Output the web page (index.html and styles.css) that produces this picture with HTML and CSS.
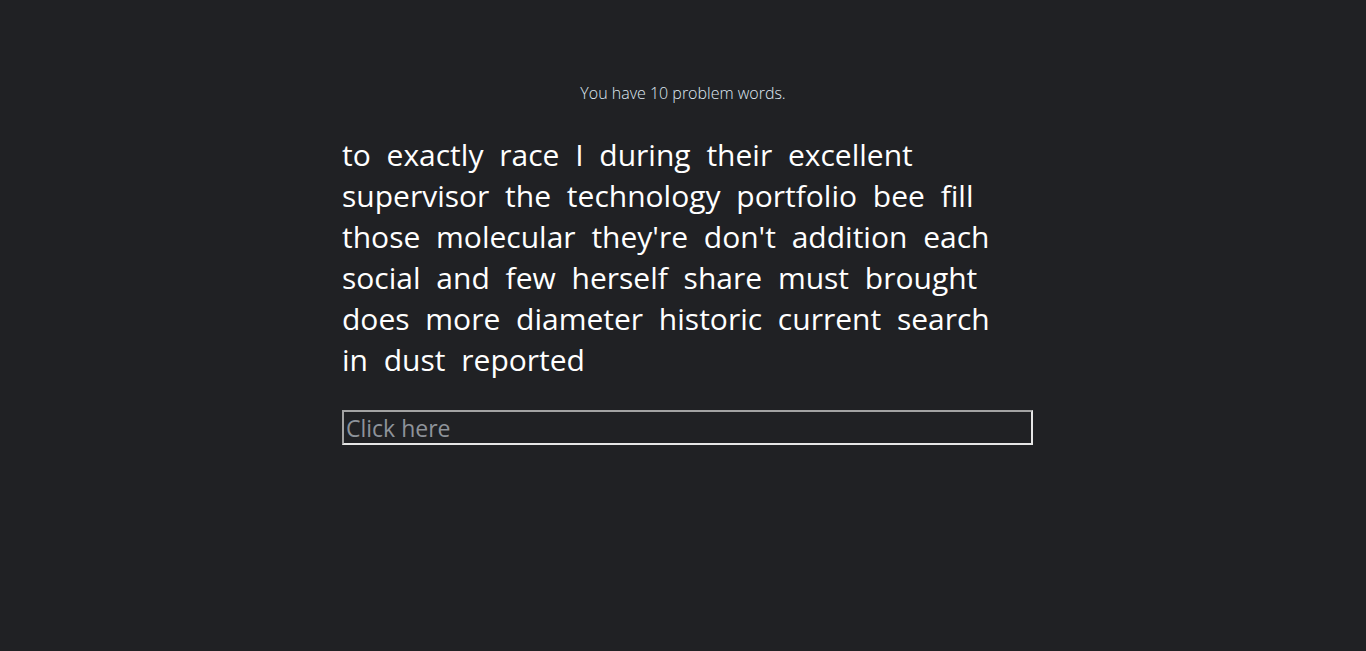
FILE: index.html
```html
<!DOCTYPE html>
<html>
<head>
<meta charset="utf-8">
<link rel="stylesheet" href="styles.css">
</head>
<body>
<p class="status">You have 10 problem words.</p>
<main class="practice">
  <div class="words">to exactly race I during their excellent supervisor the technology portfolio bee fill those molecular they're don't addition each social and few herself share must brought does more diameter historic current search in dust reported</div>
  <input class="entry" type="text" placeholder="Click here">
</main>
</body>
</html>
```
FILE: styles.css
```css
html, body {
  margin: 0;
  background: #202124;
}
body {
  font-family: "Open Sans", "DejaVu Sans", sans-serif;
  color: #ffffff;
}
.status {
  margin: 0;
  padding-top: 82px;
  text-align: center;
  font-size: 16px;
  line-height: 22px;
  color: #dfe8f2;
  font-weight: 300;
}
.practice {
  width: 691px;
  margin: 0 auto;
  padding-left: 9px;
  padding-top: 30px;
}
.words {
  font-size: 30px;
  line-height: 41px;
  word-spacing: 8px;
  padding-right: 17px;
}
.entry {
  display: block;
  box-sizing: border-box;
  width: 691px;
  height: 35px;
  margin-top: 30px;
  padding: 1px 2px 0;
  background: transparent;
  border-style: solid;
  border-width: 2px;
  border-color: #a3a3a3 #e6e6e6 #e6e6e6 #a3a3a3;
  font-family: "Open Sans", sans-serif;
  font-size: 23px;
  color: #ffffff;
  outline: none;
}
.entry::placeholder {
  color: #8e939a;
}
```
